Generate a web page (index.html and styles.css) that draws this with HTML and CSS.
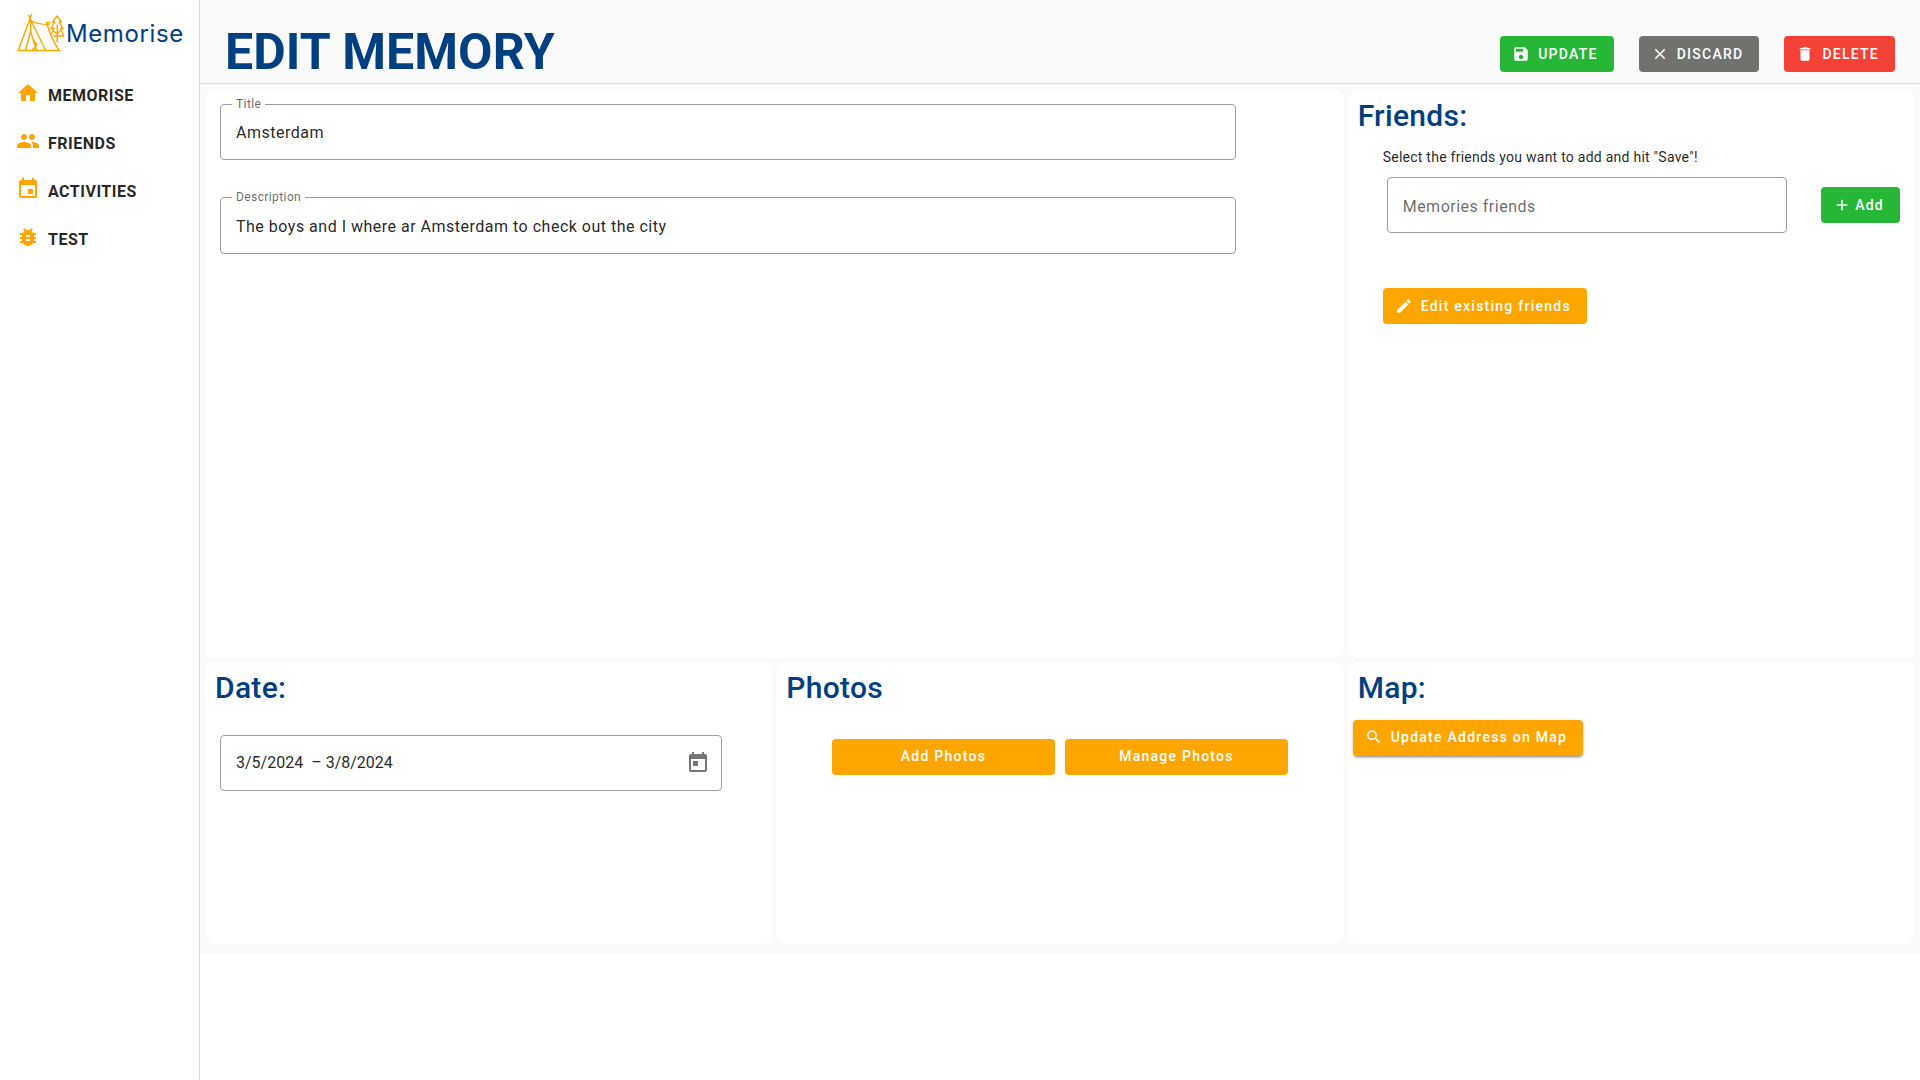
FILE: index.html
```html
<!DOCTYPE html>
<html lang="en">
<head>
<meta charset="utf-8">
<title>Memorise</title>
<link rel="stylesheet" href="styles.css">
</head>
<body>
<div class="app">
  <aside class="sidebar">
    <div class="logo">
      <svg class="logo-mark" viewBox="0 0 48 40" width="48" height="40">
        <path d="M14.7 1.3 1.2 37.5M11.5 2.3l2 4.2L28.5 37M13.5 6.5l.3 13M13.800 17.500 8.500 37.500M13.500 18l6 19.500M15.800 26l4 6-5 5.500M14.500 8Q21 11.500 31.500 11.500M29.500 9.500Q35 28 42.500 37.500M1 37.500H43M30 9.500h3"/>
        <path d="M40 3l-4.500 6h2.300l-3.800 6.500h3L33.800 22M40 3l4.500 6h-2.300l3.800 6.500h-2.500l3.200 7.500H36.500M40.200 12v17M37 18.500l3 2.500 3-3"/>
      </svg>
      <span class="logo-text">Memorise</span>
    </div>
    <nav class="nav">
      <a class="nav-item"><svg viewBox="0 0 24 24"><path d="M10 20v-6h4v6h5v-8h3L12 3 2 12h3v8z"/></svg><span>MEMORISE</span></a>
      <a class="nav-item"><svg viewBox="0 0 24 24"><path d="M16 11c1.660 0 2.990-1.340 2.990-3S17.660 5 16 5c-1.660 0-3 1.340-3 3s1.340 3 3 3zm-8 0c1.660 0 2.990-1.340 2.990-3S9.660 5 8 5C6.340 5 5 6.340 5 8s1.340 3 3 3zm0 2c-2.330 0-7 1.170-7 3.500V19h14v-2.500c0-2.330-4.670-3.500-7-3.500zm8 0c-.29 0-.62.020-.97.050 1.160.84 1.970 1.970 1.970 3.450V19h6v-2.500c0-2.330-4.670-3.500-7-3.500z"/></svg><span>FRIENDS</span></a>
      <a class="nav-item"><svg viewBox="0 0 24 24"><path d="M17 12h-5v5h5v-5zM16 1v2H8V1H6v2H5c-1.110 0-1.990.9-1.990 2L3 19c0 1.100.89 2 2 2h14c1.100 0 2-.9 2-2V5c0-1.100-.9-2-2-2h-1V1h-2zm3 18H5V8h14v11z"/></svg><span>ACTIVITIES</span></a>
      <a class="nav-item"><svg viewBox="0 0 24 24"><path d="M20 8h-2.810c-.45-.78-1.070-1.450-1.820-1.960L17 4.410 15.590 3l-2.170 2.170C12.960 5.060 12.490 5 12 5c-.49 0-.96.060-1.410.17L8.410 3 7 4.410l1.620 1.630C7.880 6.550 7.260 7.220 6.810 8H4v2h2.090c-.05.33-.09.66-.09 1v1H4v2h2v1c0 .34.040.67.090 1H4v2h2.810c1.040 1.790 2.970 3 5.190 3s4.150-1.210 5.190-3H20v-2h-2.090c.05-.33.090-.66.090-1v-1h2v-2h-2v-1c0-.34-.04-.67-.09-1H20V8zm-6 8h-4v-2h4v2zm0-4h-4v-2h4v2z"/></svg><span>TEST</span></a>
    </nav>
  </aside>

  <main class="main">
    <header class="header">
      <h1>EDIT MEMORY</h1>
      <div class="actions">
        <button class="btn green"><svg viewBox="0 0 24 24"><path d="M17 3H5c-1.110 0-2 .9-2 2v14c0 1.100.89 2 2 2h14c1.100 0 2-.9 2-2V7l-4-4zm-5 16c-1.660 0-3-1.340-3-3s1.340-3 3-3 3 1.340 3 3-1.340 3-3 3zm3-10H5V5h10v4z"/></svg>UPDATE</button>
        <button class="btn gray"><svg viewBox="0 0 24 24"><path d="M19 6.410 17.590 5 12 10.590 6.410 5 5 6.410 10.590 12 5 17.590 6.410 19 12 13.410 17.590 19 19 17.590 13.410 12z"/></svg>DISCARD</button>
        <button class="btn red"><svg viewBox="0 0 24 24"><path d="M6 19c0 1.100.9 2 2 2h8c1.100 0 2-.9 2-2V7H6v12zM19 4h-3.500l-1-1h-5l-1 1H5v2h14V4z"/></svg>DELETE</button>
      </div>
    </header>

    <div class="grid">
      <section class="card details">
        <fieldset class="field"><legend>Title</legend><span>Amsterdam</span></fieldset>
        <fieldset class="field description"><legend>Description</legend><span>The boys and I where ar Amsterdam to check out the city</span></fieldset>
      </section>

      <section class="card">
        <h2>Friends:</h2>
        <div class="friends">
          <p>Select the friends you want to add and hit "Save"!</p>
          <div class="add-row">
            <div class="box select">Memories friends</div>
            <button class="btn green"><svg viewBox="0 0 24 24"><path d="M19 13h-6v6h-2v-6H5v-2h6V5h2v6h6v2z"/></svg>Add</button>
          </div>
          <button class="btn orange"><svg viewBox="0 0 24 24"><path d="M3 17.250V21h3.750L17.810 9.940l-3.750-3.750L3 17.250zM20.710 7.040c.39-.39.39-1.020 0-1.410l-2.340-2.340c-.39-.39-1.020-.39-1.410 0l-1.830 1.830 3.750 3.750 1.830-1.830z"/></svg>Edit existing friends</button>
        </div>
      </section>

      <section class="card">
        <h2>Date:</h2>
        <div class="box date">
          <span class="date-start">3/5/2024</span><span class="dash">–</span><span>3/8/2024</span>
          <svg viewBox="0 0 24 24"><path d="M19 3h-1V1h-2v2H8V1H6v2H5c-1.110 0-1.990.9-1.990 2L3 19c0 1.100.89 2 2 2h14c1.100 0 2-.9 2-2V5c0-1.100-.9-2-2-2zm0 16H5V8h14v11zM7 10h5v5H7z"/></svg>
        </div>
      </section>

      <section class="card">
        <h2>Photos</h2>
        <div class="photos">
          <button class="btn orange">Add Photos</button>
          <button class="btn orange">Manage Photos</button>
        </div>
      </section>

      <section class="card">
        <h2>Map:</h2>
        <button class="btn orange raised"><svg viewBox="0 0 24 24"><path d="M15.500 14h-.79l-.28-.27C15.410 12.590 16 11.110 16 9.500 16 5.910 13.090 3 9.500 3S3 5.910 3 9.500 5.910 16 9.500 16c1.610 0 3.090-.59 4.230-1.570l.27.28v.79l5 4.990L20.490 19l-4.990-5zm-6 0C7.010 14 5 11.990 5 9.500S7.010 5 9.500 5 14 7.010 14 9.500 11.990 14 9.500 14z"/></svg>Update Address on Map</button>
      </section>
    </div>
  </main>
</div>
</body>
</html>
```
FILE: styles.css
```css
* { box-sizing: border-box; }
body {
  margin: 0;
  background: #fff;
  color: rgba(0, 0, 0, .87);
  font-family: Roboto, "Liberation Sans", sans-serif;
}
h1, h2, p { margin: 0; }
svg { flex: none; }

.app { display: flex; height: 1080px; overflow: hidden; }

.sidebar { width: 200px; flex: none; border-right: 1px solid #dedede; }
.logo { display: flex; height: 71px; padding: 13px 0 0 17px; }
.logo-mark path {
  fill: none;
  stroke: #ffa500;
  stroke-width: 1.4;
  stroke-linecap: round;
  stroke-linejoin: round;
}
.logo-text {
  margin-left: 1px;
  color: #004080;
  font: 400 24px/41px Inter, sans-serif;
  letter-spacing: .6px;
}
.nav-item {
  display: flex;
  align-items: center;
  gap: 8px;
  height: 48px;
  padding-left: 16px;
  font-size: 16px;
  font-weight: 700;
  letter-spacing: .5px;
}
.nav-item svg { width: 24px; height: 24px; margin-bottom: 4px; fill: #ffa500; }

.main { flex: 1; height: 954px; background: #fafafa; }
.header {
  display: flex;
  justify-content: space-between;
  height: 84px;
  padding: 21px 25px 0;
  border-bottom: 1px solid #dedede;
}
h1 { padding-top: 1px; color: #004080; font-size: 50px; font-weight: 700; line-height: 60px; letter-spacing: .1px; }
.actions { display: flex; gap: 25px; padding-top: 15px; }

.btn {
  display: inline-flex;
  align-items: center;
  justify-content: center;
  height: 36px;
  padding: 0 16px;
  border: 0;
  border-radius: 4px;
  color: #fff;
  font: 500 14px/36px Roboto, "Liberation Sans", sans-serif;
  letter-spacing: 1.25px;
  white-space: nowrap;
}
.btn svg { width: 18px; height: 18px; margin: 0 8px 0 -4px; fill: #fff; }
.green { background: #26b737; }
.gray { background: #70726e; }
.red { background: #f44336; }
.orange { background: #ffa500; }
.raised {
  margin: 14px 0 0 5px;
  padding-bottom: 1px;
  box-shadow: 0 3px 1px -2px rgba(0, 0, 0, .2), 0 2px 2px rgba(0, 0, 0, .14), 0 1px 5px rgba(0, 0, 0, .12);
}

.grid {
  display: grid;
  grid-template-columns: repeat(3, 1fr);
  grid-template-rows: repeat(3, 1fr);
  gap: 4px;
  height: 865px;
  margin-top: 5px;
  padding: 0 5px 10px;
}
.card { grid-row: span 1; min-width: 0; background: #fff; border-radius: 10px; }
.details { grid-column: span 2; grid-row: span 2; padding: 9px 0 0 15px; }
.details + .card { grid-row: span 2; }
h2 { padding: 7px 10px 0; color: #004080; font-size: 30px; font-weight: 500; line-height: 37px; letter-spacing: .3px; }

.field {
  width: 1016px;
  height: 62px;
  margin: 0 0 31px;
  padding: 0 15px 0 11px;
  border: 1px solid #9e9e9e;
  border-radius: 4px;
  font-size: 16px;
  letter-spacing: .5px;
}
.description { height: 63px; }
.field legend {
  padding: 0 4px;
  color: rgba(0, 0, 0, .6);
  font-size: 12px;
  line-height: 12px;
  letter-spacing: .4px;
}
.field span { display: block; padding: 11px 0 0 4px; line-height: 24px; }
.description span { padding-top: 12px; }

.box {
  display: flex;
  align-items: center;
  height: 56px;
  padding: 0 15px;
  border: 1px solid #9e9e9e;
  border-radius: 4px;
  font-size: 16px;
}
.details + .card h2 { padding-top: 8px; }
.friends { padding: 13px 15px 0 35px; }
.friends p { font-size: 14px; line-height: 20px; letter-spacing: .25px; }
.add-row { display: flex; align-items: center; justify-content: space-between; padding: 10px 0 55px 4px; }
.add-row .btn svg { margin-right: 4px; }
.select { width: 400px; color: rgba(0, 0, 0, .6); letter-spacing: .5px; padding-top: 2px; }
.date { width: 502px; margin: 29px 0 0 15px; }
.date svg { width: 24px; height: 24px; margin-left: auto; margin-right: -4px; fill: #757575; }
.date-start { margin-right: 8px; }
.dash { margin-right: 4px; }
.photos { display: flex; justify-content: center; gap: 10px; padding-top: 33px; }
.photos .btn { width: 223px; padding-bottom: 1px; }
```
